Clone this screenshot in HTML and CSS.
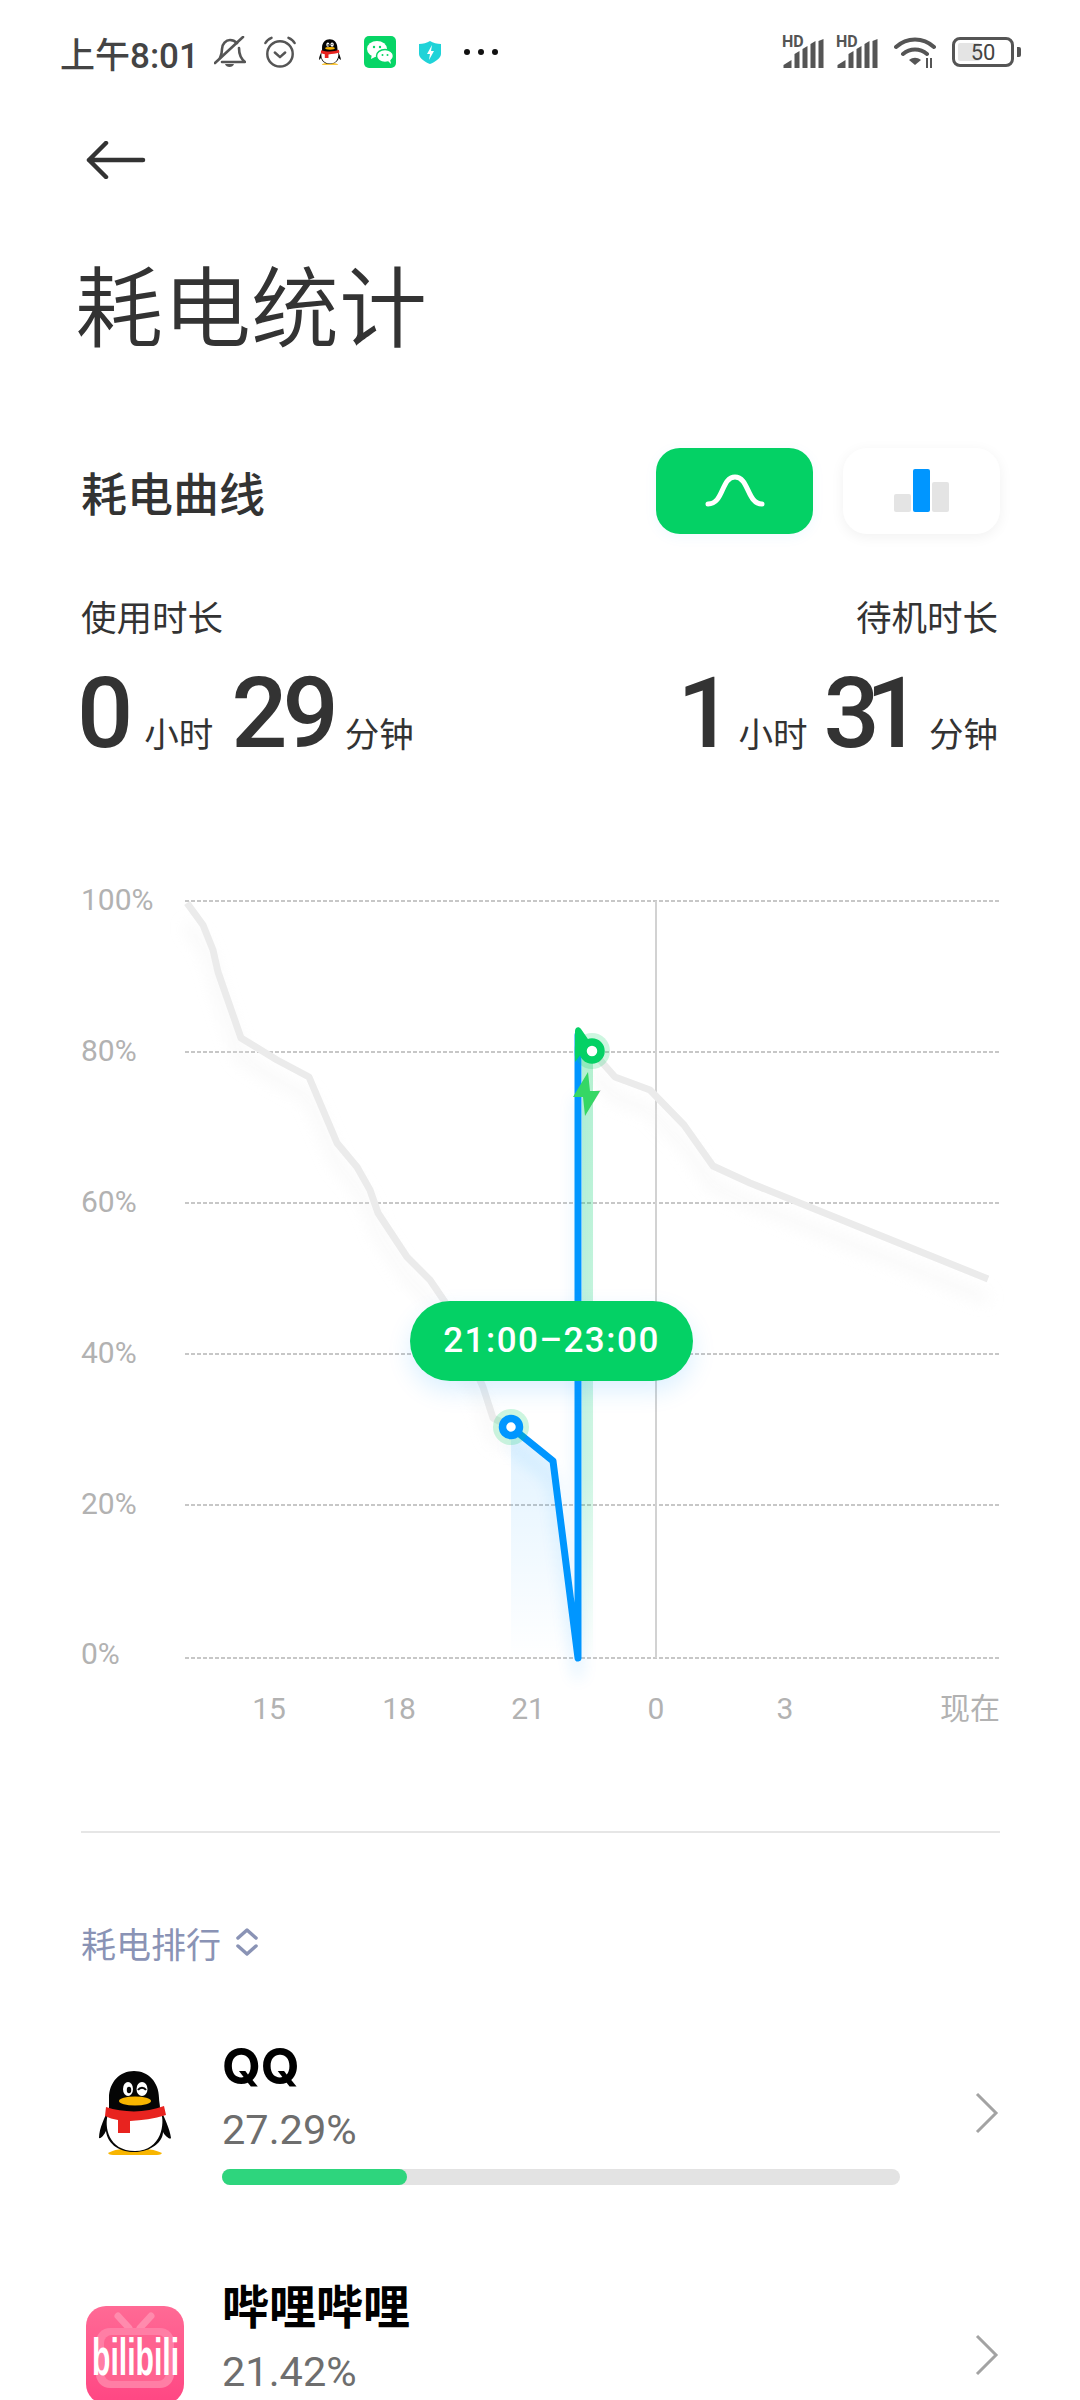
FILE: index.html
```html
<!DOCTYPE html>
<html lang="zh-CN">
<head>
    <meta charset="UTF-8">
    <meta name="viewport" content="width=device-width, initial-scale=1.0">
    <title>耗电统计</title>
    <link rel="stylesheet" href="styles.css">
</head>
<body>
    <svg class="icon-defs" width="0" height="0">
        <symbol id="penguin" viewBox="0 0 72 84">
            <path d="M9 82c5-3 15-5 26-5s22 2 28 5c-1 2-4 2-8 2H17c-4 0-7 0-8-2z" fill="#f8b500"/>
            <path d="M35 0c14 0 25 11 25 27 0 3 1 7 1 10 4 9 10 21 11 30-1 2-6-2-8-6 0 10-12 20-29 20S8 71 7 60c-2 4-5 8-7 7 0-10 6-21 10-30 0-3 0-7 0-10C10 11 21 0 35 0z" fill="#050505"/>
            <path d="M9 43c16 4 37 4 53-1 4 9 1 38-26 38C9 80 5 55 9 43z" fill="#fff"/>
            <path d="M7 36c18 6 40 6 58-1l2 9c-12 4-24 5-36 6v12H19V49c-5-1-9-2-13-4z" fill="#e8231f"/>
            <ellipse cx="36" cy="30" rx="16" ry="4.5" fill="#f8b500"/>
            <ellipse cx="29" cy="18" rx="5" ry="7" fill="#fff"/>
            <ellipse cx="30" cy="19" rx="2.2" ry="3.2" fill="#050505"/>
            <ellipse cx="43" cy="18" rx="5.5" ry="7" fill="#fff"/>
            <path d="M39 19c2-3 6-3 8 0" fill="none" stroke="#050505" stroke-width="2"/>
        </symbol>
    </svg>

    <div class="status-bar">
        <div class="status-left">
            <span class="status-time">上午8:01</span>
            <svg class="status-icon" viewBox="0 0 32 32">
                <path d="M6 22c1-2 2-4 2-9 0-5 4-9 8-9 3 0 5 1 7 3M25 12c0 6 1 10 6 14H8" class="glyph-line"/>
                <path d="M1 27L29 1" class="glyph-line"/>
                <path d="M11 28h9c-1 4-8 4-9 0z" fill="#555"/>
            </svg>
            <svg class="status-icon" viewBox="0 0 34 34">
                <circle cx="17" cy="19" r="13.500" class="glyph-line"/>
                <path d="M11.500 17.500l5.500 5 5.500-5" class="glyph-line"/>
                <path d="M1.500 7.500c1-2 4-4.500 6.500-5.500M32.500 7.500c-1-2-4-4.500-6.500-5.500" class="glyph-line"/>
            </svg>
            <svg class="status-icon" viewBox="0 0 32 32"><use href="#penguin" x="5" y="2" width="22" height="28"/></svg>
            <svg class="status-icon" viewBox="0 0 32 32">
                <rect width="32" height="32" rx="5" fill="#07d566"/>
                <ellipse cx="13" cy="13" rx="10" ry="8" fill="#fff"/>
                <path d="M8 18l-1 5 6-3z" fill="#fff"/>
                <ellipse cx="21" cy="20" rx="8.5" ry="6.5" fill="#fff" stroke="#07d566" stroke-width="1.5"/>
                <path d="M24 25l3 3-1-5z" fill="#fff"/>
                <circle cx="10" cy="11" r="1.2" fill="#07d566"/><circle cx="16" cy="11" r="1.2" fill="#07d566"/>
                <circle cx="18.5" cy="19" r="1" fill="#07d566"/><circle cx="23.5" cy="19" r="1" fill="#07d566"/>
            </svg>
            <svg class="status-icon" viewBox="0 0 32 32">
                <path d="M16 5c3 2 7 3 11 3v10c0 4-6 8-11 10C11 26 5 22 5 18V8c4 0 8-1 11-3z" fill="#1fd3d8"/>
                <path d="M18 9l-5 9h3l-1 6 5-9h-3z" fill="#fff"/>
            </svg>
            <div class="status-dots"><i></i><i></i><i></i></div>
        </div>
        <div class="status-right">
            <div class="signal">
                <span class="signal-hd">HD</span>
                <svg viewBox="0 0 40 29" class="signal-bars"><path d="M0 29v-3l8-5v8zM11 29V15l5-3v17zM19 29V10l5-3v22zM27 29V5l5-3v27zM35 29V2l5-2v29z" fill="#555"/></svg>
            </div>
            <div class="signal">
                <span class="signal-hd">HD</span>
                <svg viewBox="0 0 40 29" class="signal-bars"><path d="M0 29v-3l8-5v8zM11 29V15l5-3v17zM19 29V10l5-3v22zM27 29V5l5-3v27zM35 29V2l5-2v29z" fill="#555"/></svg>
            </div>
            <svg class="wifi" viewBox="0 0 42 32">
                <path d="M2 10c11-10 27-10 38 0M9 17c7-6 17-6 24 0" class="glyph-line wifi-arc"/>
                <path d="M15 23c4-3 8-3 12 0l-6 5z" fill="#555"/>
                <path d="M33 21v10M37 21v10" stroke="#555" stroke-width="2"/>
            </svg>
            <div class="battery">
                <div class="battery-body">
                    <div class="battery-fill"></div>
                    <span class="battery-text">50</span>
                </div>
                <div class="battery-nub"></div>
            </div>
        </div>
    </div>

    <div class="back-row">
        <svg class="back-arrow" viewBox="0 0 60 38">
            <path d="M57 19H3M20 2L3 19l17 17" fill="none" stroke="#333" stroke-width="4.500" stroke-linecap="round" stroke-linejoin="round"/>
        </svg>
    </div>

    <h1 class="page-title">耗电统计</h1>

    <div class="section-head">
        <span class="section-title">耗电曲线</span>
        <div class="toggle-group">
            <div class="toggle-button toggle-active">
                <svg viewBox="0 0 60 36" class="toggle-icon">
                    <path d="M3 31c16 0 13-27 27-27s12 27 27 27" fill="none" stroke="#fff" stroke-width="5" stroke-linecap="round"/>
                </svg>
            </div>
            <div class="toggle-button">
                <svg viewBox="0 0 56 44" class="toggle-icon">
                    <rect x="0" y="25" width="17" height="18" rx="2" fill="#e4e4e4"/>
                    <rect x="19" y="0" width="17" height="43" rx="2" fill="#0096ff"/>
                    <rect x="38" y="13" width="17" height="30" rx="2" fill="#e4e4e4"/>
                </svg>
            </div>
        </div>
    </div>

    <div class="usage">
        <div class="usage-block">
            <div class="usage-label">使用时长</div>
            <div class="usage-value">
                <span class="usage-num">0</span><span class="usage-unit">小时</span>
                <span class="usage-num">29</span><span class="usage-unit">分钟</span>
            </div>
        </div>
        <div class="usage-block usage-right">
            <div class="usage-label">待机时长</div>
            <div class="usage-value">
                <span class="usage-num">1</span><span class="usage-unit">小时</span>
                <span class="usage-num">31</span><span class="usage-unit">分钟</span>
            </div>
        </div>
    </div>

    <div class="chart">
        <svg class="chart-svg" viewBox="0 860 1080 880" width="1080" height="880">
            <defs>
                <linearGradient id="blueFade" x1="0" y1="0" x2="0" y2="1">
                    <stop offset="0" stop-color="#0096ff" stop-opacity="0.12"/>
                    <stop offset="0.85" stop-color="#0096ff" stop-opacity="0.02"/>
                    <stop offset="1" stop-color="#0096ff" stop-opacity="0"/>
                </linearGradient>
                <linearGradient id="greenFade" x1="0" y1="0" x2="0" y2="1">
                    <stop offset="0" stop-color="#04d165" stop-opacity="0.3"/>
                    <stop offset="0.7" stop-color="#04d165" stop-opacity="0.18"/>
                    <stop offset="1" stop-color="#04d165" stop-opacity="0"/>
                </linearGradient>
                <filter id="soft" filterUnits="userSpaceOnUse" x="0" y="860" width="1080" height="880"><feGaussianBlur stdDeviation="8"/></filter>
            </defs>

            <g class="grid-lines">
                <path d="M185 901H1000M185 1052H1000M185 1203H1000M185 1354H1000M185 1505H1000M185 1658H1000"/>
            </g>
            <path class="now-line" d="M656 901V1658"/>

            <g class="axis-y">
                <text x="81" y="910">100%</text>
                <text x="81" y="1061">80%</text>
                <text x="81" y="1212">60%</text>
                <text x="81" y="1363">40%</text>
                <text x="81" y="1514">20%</text>
                <text x="81" y="1664">0%</text>
            </g>
            <g class="axis-x">
                <text x="269" y="1719">15</text>
                <text x="399" y="1719">18</text>
                <text x="528" y="1719">21</text>
                <text x="656" y="1719">0</text>
                <text x="785" y="1719">3</text>
                <text x="1000" y="1719" class="axis-end">现在</text>
            </g>

            <!-- grey day curve -->
            <g filter="url(#soft)" opacity="0.5" transform="translate(0 20)">
                <path class="curve-grey" d="M187 905L203 925 213 950 218 972 241 1038 277 1060 309 1077 337 1143 357 1167 370 1190 378 1213 407 1257 430 1280 445 1302 483 1387 493 1418 511 1427M592 1051L615 1077 650 1090 684 1125 713 1166 750 1183 988 1279"/>
            </g>
            <path class="curve-grey" d="M187 903L203 925 213 950 218 972 241 1038 277 1060 309 1077 337 1143 357 1167 370 1190 378 1213 407 1257 430 1280 445 1302 483 1387 493 1418 511 1427"/>
            <path class="curve-grey" d="M592 1051L615 1077 650 1090 684 1125 713 1166 750 1183 988 1279"/>

            <!-- selected range -->
            <path d="M511 1427L553 1461 578 1658H511z" fill="url(#blueFade)"/>
            <rect x="582" y="1050" width="11" height="610" fill="url(#greenFade)"/>
            <path class="curve-blue curve-glow" d="M511 1445L553 1479 578 1676 578 1100" filter="url(#soft)"/>
            <path class="curve-blue" d="M511 1427L553 1461 578 1658V1035"/>

            <path d="M575 1062V1031c0-4 4-5 6-2l9 13z" fill="#04d165"/>
            <circle cx="592" cy="1051" r="18" fill="#04d165" opacity="0.2"/>
            <circle cx="592" cy="1051" r="9" fill="#fff" stroke="#04d165" stroke-width="7.500"/>

            <path d="M594 1091L601 1090 585 1116z" fill="#d4d4d4"/>
            <path d="M588 1072L573 1097H583L585 1116 600 1091H590z" fill="#35d765"/>

            <circle cx="511" cy="1427" r="18" fill="#04d165" opacity="0.2"/>
            <circle cx="511" cy="1427" r="8.500" fill="#fff" stroke="#0096ff" stroke-width="7.500"/>
        </svg>
        <div class="chart-tooltip">21:00–23:00</div>
    </div>

    <div class="divider"></div>

    <div class="rank-head">
        <span>耗电排行</span>
        <svg class="rank-sort" viewBox="0 0 22 30">
            <path d="M2 11l9-8 9 8M2 19l9 8 9-8" fill="none" stroke="#8a93b5" stroke-width="3.500" stroke-linecap="round" stroke-linejoin="round"/>
        </svg>
    </div>

    <div class="app-row">
        <div class="app-icon">
            <svg class="app-penguin"><use href="#penguin"/></svg>
        </div>
        <div class="app-info">
            <div class="app-name app-name-latin">QQ</div>
            <div class="app-percent">27.29%</div>
            <div class="app-bar"><div class="app-bar-fill" style="width: 27.29%"></div></div>
        </div>
        <svg class="app-chevron" viewBox="0 0 24 42">
            <path d="M2 2l19 19L2 40" fill="none" stroke="#a3a3a3" stroke-width="3"/>
        </svg>
    </div>

    <div class="app-row">
        <div class="app-icon">
            <svg class="app-bili" viewBox="0 0 98 98">
                <defs>
                    <linearGradient id="biliBg" x1="0" y1="0" x2="0" y2="1">
                        <stop offset="0" stop-color="#ff6a95"/>
                        <stop offset="1" stop-color="#ff4683"/>
                    </linearGradient>
                </defs>
                <rect width="98" height="98" rx="20" fill="url(#biliBg)"/>
                <path d="M32 10l11 12M65 10L54 22" stroke="#ff8bad" stroke-width="7" stroke-linecap="round"/>
                <rect x="10" y="22" width="78" height="60" rx="14" fill="#ff7ea5"/>
                <rect x="18" y="29" width="62" height="46" rx="8" fill="#ff6290"/>
                <text class="bili-word" transform="translate(6 69) scale(0.58 1)">bilibili</text>
            </svg>
        </div>
        <div class="app-info">
            <div class="app-name">哔哩哔哩</div>
            <div class="app-percent">21.42%</div>
            <div class="app-bar"><div class="app-bar-fill" style="width: 21.42%"></div></div>
        </div>
        <svg class="app-chevron" viewBox="0 0 24 42">
            <path d="M2 2l19 19L2 40" fill="none" stroke="#a3a3a3" stroke-width="3"/>
        </svg>
    </div>
</body>
</html>
```

FILE: styles.css
```css
html, body {
    margin: 0;
    height: 2400px;
    overflow: hidden;
    background: #fff;
}
body {
    font-family: Roboto, "Noto Sans CJK SC", sans-serif;
    color: #333;
}
.icon-defs {
    position: absolute;
}
.glyph-line {
    fill: none;
    stroke: #555;
    stroke-width: 2.600;
    stroke-linecap: round;
    stroke-linejoin: round;
}

/* status bar */
.status-bar {
    height: 104px;
    padding: 0 60px;
    display: flex;
    justify-content: space-between;
    align-items: center;
}
.status-left {
    display: flex;
    align-items: center;
    gap: 18px;
}
.status-time {
    font-size: 35px;
    font-weight: 500;
    color: #444;
    width: 136px;
    white-space: nowrap;
}
.status-icon {
    width: 32px;
    height: 32px;
}
.status-dots {
    display: flex;
    gap: 8px;
}
.status-dots i {
    width: 6px;
    height: 6px;
    border-radius: 50%;
    background: #111;
}
.status-right {
    display: flex;
    align-items: center;
    margin-right: -1px;
}
.signal {
    width: 41px;
    height: 32px;
    margin-right: 13px;
    position: relative;
}
.signal-hd {
    position: absolute;
    left: -1px;
    top: -3px;
    font-size: 16px;
    line-height: 18px;
    font-weight: 700;
    color: #555;
}
.signal-bars {
    position: absolute;
    left: 0;
    bottom: 0;
    width: 41px;
    height: 29px;
}
.wifi {
    width: 42px;
    height: 32px;
    margin: 2px 16px 0 3px;
}
.wifi-arc {
    stroke-width: 4;
}
.battery {
    display: flex;
    align-items: center;
    gap: 3px;
}
.battery-body {
    width: 62px;
    height: 30px;
    box-sizing: border-box;
    border: 3.500px solid #555;
    border-radius: 8px;
    display: flex;
    align-items: center;
    justify-content: center;
    position: relative;
}
.battery-fill {
    position: absolute;
    left: 3px;
    top: 3px;
    bottom: 3px;
    width: 22px;
    background: #e4e4e4;
    border-radius: 2px;
}
.battery-text {
    position: relative;
    font-size: 22px;
    color: #444;
}
.battery-nub {
    width: 4px;
    height: 10px;
    background: #555;
    border-radius: 0 2px 2px 0;
}

/* header */
.back-row {
    height: 112px;
    padding-left: 86px;
    display: flex;
    align-items: center;
}
.back-arrow {
    width: 60px;
    height: 38px;
}
.page-title {
    margin: 32px 0 0;
    padding-left: 75px;
    font-size: 88px;
    font-weight: 350;
    line-height: 124px;
    color: #333;
}
.section-head {
    margin-top: 76px;
    padding: 0 80px 0 81px;
    display: flex;
    justify-content: space-between;
    align-items: center;
}
.section-title {
    font-size: 46px;
    font-weight: 500;
}
.toggle-group {
    display: flex;
    gap: 30px;
}
.toggle-button {
    width: 157px;
    height: 86px;
    border-radius: 24px;
    background: #fff;
    display: flex;
    align-items: center;
    justify-content: center;
    box-shadow: 0 3px 14px rgba(0, 0, 0, 0.06);
}
.toggle-active {
    background: #04d165;
    box-shadow: 0 3px 14px rgba(0, 150, 255, 0.06);
}
.toggle-icon {
    width: 60px;
    height: 44px;
}

/* usage numbers */
.usage {
    height: 261px;
    margin-top: 65px;
    padding: 0 82px 0 81px;
    display: flex;
    justify-content: space-between;
}
.usage-label {
    font-size: 35.500px;
    line-height: 40px;
}
.usage-right {
    text-align: right;
}
.usage-value {
    display: flex;
    align-items: baseline;
    margin-top: 19px;
}
.usage-right .usage-value {
    justify-content: flex-end;
}
.usage-num {
    font-size: 99px;
    font-weight: 500;
    line-height: 110px;
    letter-spacing: -5px;
    margin-left: -4px;
}
.usage-num + .usage-unit {
    margin-left: 16px;
    margin-right: 22px;
}
.usage-num ~ .usage-num + .usage-unit {
    margin-left: 11px;
    margin-right: 0;
}
.usage-right .usage-num {
    letter-spacing: -14px;
}
.usage-right .usage-num + .usage-unit {
    margin-left: 19px;
    margin-right: 20px;
}
.usage-right .usage-num ~ .usage-num + .usage-unit {
    margin-left: 21px;
    margin-right: 0;
}
.usage-unit {
    font-size: 34.500px;
}

/* chart */
.chart {
    position: relative;
    height: 880px;
}
.chart-svg {
    display: block;
}
.grid-lines path {
    fill: none;
    stroke: #b5b5b5;
    stroke-width: 1.500;
    stroke-dasharray: 4 2;
}
.now-line {
    stroke: #d2d2d2;
    stroke-width: 2;
}
.axis-y text, .axis-x text {
    font-size: 30px;
    fill: #b2b2b2;
}
.axis-x text {
    text-anchor: middle;
}
.axis-x .axis-end {
    text-anchor: end;
}
.curve-grey {
    fill: none;
    stroke: #ebebeb;
    stroke-width: 7;
    stroke-linejoin: round;
}
.curve-blue {
    fill: none;
    stroke: #0096ff;
    stroke-width: 7;
    stroke-linejoin: round;
    stroke-linecap: round;
}
.curve-glow {
    opacity: 0.15;
}
.chart-tooltip {
    position: absolute;
    left: 410px;
    top: 441px;
    width: 283px;
    height: 80px;
    border-radius: 40px;
    background: #04d165;
    color: #fff;
    font-size: 35px;
    font-weight: 500;
    letter-spacing: 1.500px;
    line-height: 80px;
    text-align: center;
    box-shadow: 0 10px 24px rgba(0, 150, 255, 0.14);
}

/* ranking */
.divider {
    margin: 91px 80px 0 81px;
    height: 2px;
    background: #e6e6e6;
}
.rank-head {
    margin-top: 84px;
    padding-left: 81px;
    height: 50px;
    display: flex;
    align-items: center;
    gap: 15px;
    font-size: 35px;
    color: #8a93b5;
}
.rank-sort {
    width: 22px;
    height: 30px;
}
.app-row {
    height: 242px;
    padding-left: 86px;
    display: flex;
    align-items: center;
}
.rank-head + .app-row {
    margin-top: 25px;
}
.app-icon {
    width: 98px;
    height: 98px;
    display: flex;
    align-items: center;
    justify-content: center;
}
.app-penguin {
    width: 72px;
    height: 84px;
}
.app-bili {
    width: 98px;
    height: 98px;
}
.bili-word {
    font-family: "Liberation Sans", sans-serif;
    font-size: 52px;
    font-weight: 700;
    fill: #fff;
}
.app-info {
    align-self: flex-start;
    width: 678px;
    margin-left: 38px;
    padding-top: 44px;
}
.app-name {
    font-size: 47px;
    font-weight: 700;
    line-height: 60px;
    color: #000;
}
.app-name-latin {
    font-family: Inter, sans-serif;
    font-size: 50px;
}
.app-percent {
    font-size: 41.500px;
    line-height: 60px;
    margin-top: 4px;
    color: #6e6e6e;
}
.app-bar {
    margin-top: 9px;
    height: 16px;
    border-radius: 8px;
    background: #e3e3e3;
}
.app-bar-fill {
    height: 100%;
    border-radius: 8px;
    background: #2ed57d;
}
.app-chevron {
    width: 24px;
    height: 42px;
    margin-left: 75px;
}
```
